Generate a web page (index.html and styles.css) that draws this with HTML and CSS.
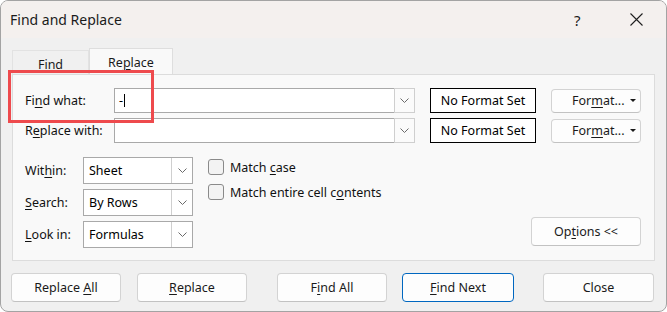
FILE: index.html
```html
<!DOCTYPE html>
<html lang="en">
<head>
    <meta charset="UTF-8">
    <title>Find and Replace</title>
    <link rel="stylesheet" href="styles.css">
</head>
<body>
    <div class="window">
        <div class="titlebar">
            <span class="title">Find and Replace</span>
            <span class="help">?</span>
            <span class="close-x">
                <svg width="13" height="13" viewBox="0 0 13 13"><path d="M0.5 0.5 L12.5 12.5 M12.5 0.5 L0.5 12.5" stroke="#1f1f1f" stroke-width="1.1" fill="none"/></svg>
            </span>
        </div>

        <div class="content">
            <div class="tabs">
                <div class="tab">Find</div>
                <div class="tab active"><span>Re<u>p</u>lace</span></div>
            </div>

            <div class="panel">
                <div class="highlight"></div>

                <div class="top-grid">
                    <label class="label">Fi<u>n</u>d what:</label>
                    <div class="combo">
                        <span class="combo-text">-<span class="caret"></span></span>
                        <span class="drop">
                            <svg width="9" height="5" viewBox="0 0 9 5"><path d="M0.5 0.5 L4.5 4.5 L8.5 0.5" stroke="#6a6a6a" fill="none"/></svg>
                        </span>
                    </div>
                    <div class="no-format">No Format Set</div>
                    <button class="btn format-btn"><span>For<u>m</u>at...</span><span class="tri"></span></button>

                    <label class="label">R<u>e</u>place with:</label>
                    <div class="combo">
                        <span class="combo-text"></span>
                        <span class="drop">
                            <svg width="9" height="5" viewBox="0 0 9 5"><path d="M0.5 0.5 L4.5 4.5 L8.5 0.5" stroke="#6a6a6a" fill="none"/></svg>
                        </span>
                    </div>
                    <div class="no-format">No Format Set</div>
                    <button class="btn format-btn"><span>For<u>m</u>at...</span><span class="tri"></span></button>
                </div>

                <div class="options">
                    <div class="option-grid">
                        <label class="label">Wit<u>h</u>in:</label>
                        <div class="select">
                            <span class="select-text">Sheet</span>
                            <span class="select-drop">
                                <svg width="9" height="5" viewBox="0 0 9 5"><path d="M0.5 0.5 L4.5 4.5 L8.5 0.5" stroke="#6a6a6a" fill="none"/></svg>
                            </span>
                        </div>

                        <label class="label"><u>S</u>earch:</label>
                        <div class="select">
                            <span class="select-text">By Rows</span>
                            <span class="select-drop">
                                <svg width="9" height="5" viewBox="0 0 9 5"><path d="M0.5 0.5 L4.5 4.5 L8.5 0.5" stroke="#6a6a6a" fill="none"/></svg>
                            </span>
                        </div>

                        <label class="label"><u>L</u>ook in:</label>
                        <div class="select">
                            <span class="select-text">Formulas</span>
                            <span class="select-drop">
                                <svg width="9" height="5" viewBox="0 0 9 5"><path d="M0.5 0.5 L4.5 4.5 L8.5 0.5" stroke="#6a6a6a" fill="none"/></svg>
                            </span>
                        </div>
                    </div>

                    <div class="checks">
                        <label class="check"><span class="box"></span><span>Match <u>c</u>ase</span></label>
                        <label class="check"><span class="box"></span><span>Match entire cell c<u>o</u>ntents</span></label>
                    </div>

                    <button class="btn options-btn"><span>Op<u>t</u>ions &lt;&lt;</span></button>
                </div>
            </div>

            <div class="actions">
                <button class="btn action"><span>Replace <u>A</u>ll</span></button>
                <button class="btn action"><span><u>R</u>eplace</span></button>
                <button class="btn action find-all"><span>F<u>i</u>nd All</span></button>
                <button class="btn action find-next"><span><u>F</u>ind Next</span></button>
                <button class="btn action close-btn"><span>Close</span></button>
            </div>
        </div>
    </div>
</body>
</html>
```
FILE: styles.css
```css
* {
    margin: 0;
    padding: 0;
    box-sizing: border-box;
    font-family: "Noto Sans", "Open Sans", sans-serif;
}

body {
    background: #ffffff;
    width: 667px;
    height: 312px;
    overflow: hidden;
}

.window {
    width: 667px;
    height: 312px;
    background: #f0f0f0;
    border: 1px solid #a3a3a3;
    border-radius: 8px;
    overflow: hidden;
    display: flex;
    flex-direction: column;
}

.titlebar {
    height: 37px;
    background: #f4f0ee;
    display: flex;
    align-items: center;
    padding-left: 9px;
    flex-shrink: 0;
}

.title {
    font-size: 14px;
    color: #1b1b1b;
    flex: 1;
}

.help {
    font-size: 15px;
    color: #1b1b1b;
    width: 14px;
    margin-right: 42px;
}

.close-x {
    display: flex;
    margin-right: 23px;
}

.content {
    padding: 9px 0 0 11px;
    position: relative;
}

.tabs {
    display: flex;
    align-items: flex-end;
    height: 27px;
}

.tab {
    width: 77px;
    height: 24px;
    font-size: 12.5px;
    color: #1a1a1a;
    display: flex;
    justify-content: center;
    align-items: center;
    border: 1px solid #e2e2e2;
    border-bottom: none;
    padding-top: 3px;
}

.tab.active {
    width: 84px;
    height: 27px;
    background: #f9f9f9;
    border-color: #dedede;
    margin-bottom: -1px;
    position: relative;
    padding-top: 0;
}

u {
    text-decoration: underline;
    text-underline-offset: 2px;
}

.panel {
    width: 643px;
    height: 187px;
    background: #f9f9f9;
    border: 1px solid #dcdcdc;
    padding: 13px 0 0 12px;
    position: relative;
}

.highlight {
    position: absolute;
    left: -5px;
    top: -5px;
    width: 146px;
    height: 53px;
    border: 3px solid #ee4a4d;
    pointer-events: none;
}

.top-grid {
    display: grid;
    grid-template-columns: 74px 301px 106px 90px;
    grid-auto-rows: 25px;
    column-gap: 15px;
    row-gap: 5px;
    align-items: center;
}

.label {
    font-size: 12.5px;
    color: #111;
    white-space: nowrap;
}

.combo {
    height: 25px;
    border: 1px solid #a9a9a9;
    background: #ffffff;
    display: flex;
    align-items: center;
}

.combo-text {
    flex: 1;
    font-size: 12.5px;
    padding-left: 4px;
    display: flex;
    align-items: center;
    color: #000;
}

.caret {
    display: inline-block;
    width: 1px;
    height: 13px;
    background: #000;
    margin-left: 1px;
}

.drop {
    width: 21px;
    height: 25px;
    border: 1px solid #cfcfcf;
    margin-right: -1px;
    background: #fbfbfb;
    display: flex;
    justify-content: center;
    align-items: center;
}

.no-format {
    height: 25px;
    border: 1px solid #000;
    background: #ffffff;
    font-size: 12.5px;
    color: #000;
    display: flex;
    justify-content: center;
    align-items: center;
}

.btn {
    background: #fdfdfd;
    border: 1px solid #d3d3d3;
    border-bottom-color: #c2c2c2;
    border-radius: 4px;
    font-size: 12.5px;
    color: #1a1a1a;
    display: flex;
    justify-content: center;
    align-items: center;
    white-space: nowrap;
}

.format-btn {
    height: 24px;
    padding-left: 20px;
    padding-right: 4px;
    justify-content: flex-start;
}

.tri {
    width: 0;
    height: 0;
    border-left: 3px solid transparent;
    border-right: 3px solid transparent;
    border-top: 3px solid #1a1a1a;
    margin-left: auto;
}

.options {
    display: flex;
    margin-top: 14px;
}

.option-grid {
    display: grid;
    grid-template-columns: 58px 110px;
    grid-auto-rows: 27px;
    row-gap: 5px;
    align-items: center;
}

.select {
    height: 27px;
    border: 1px solid #a9a9a9;
    background: #ffffff;
    display: flex;
    align-items: center;
}

.select-text {
    flex: 1;
    font-size: 12.5px;
    padding-left: 5px;
    color: #000;
}

.select-drop {
    width: 21px;
    height: 25px;
    border-left: 1px solid #cfcfcf;
    display: flex;
    justify-content: center;
    align-items: center;
}

.checks {
    display: flex;
    flex-direction: column;
    gap: 9px;
    margin-left: 15px;
    padding-top: 2px;
}

.check {
    display: flex;
    align-items: center;
    font-size: 12.5px;
    color: #111;
    height: 16px;
    white-space: nowrap;
}

.box {
    width: 16px;
    height: 16px;
    border: 1px solid #8a8a8a;
    border-radius: 3px;
    background: #f3f3f3;
    margin-right: 6px;
}

.options-btn {
    width: 110px;
    height: 29px;
    margin-left: auto;
    margin-right: 13px;
    align-self: flex-end;
    margin-bottom: 2px;
}

.actions {
    display: flex;
    margin-top: 12px;
    margin-left: -1px;
}

.action {
    width: 110px;
    height: 29px;
}

.action + .action {
    margin-left: 16px;
}

.action.find-all {
    margin-left: 30px;
}

.action.find-next {
    margin-left: 15px;
    width: 112px;
    border-color: #0067c0;
}

.action.close-btn {
    margin-left: 29px;
    width: 111px;
}
```
